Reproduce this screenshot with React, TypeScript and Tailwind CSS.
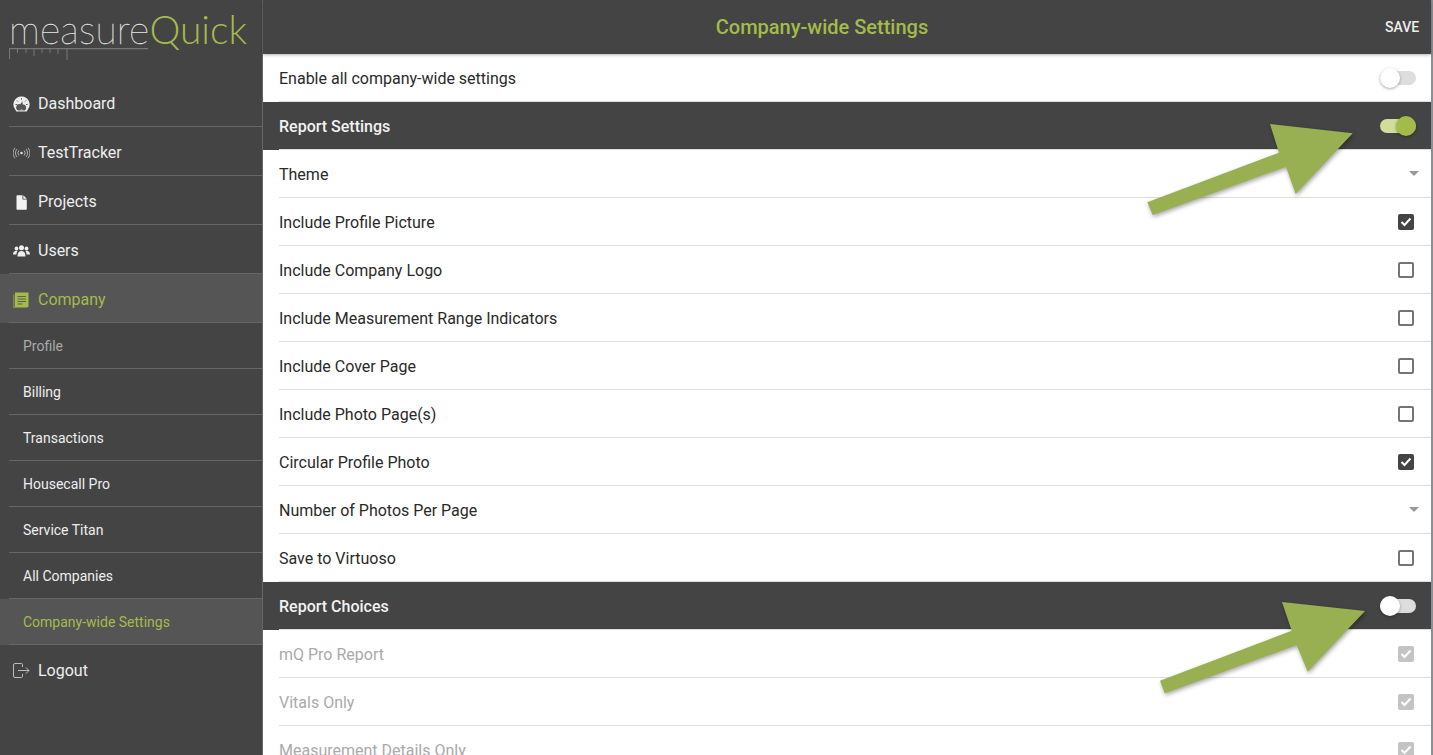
import type { ReactNode } from "react";

const green = "text-[#a3bb4a]";

function GaugeIcon() {
  return (
    <svg width="17" height="16" viewBox="0 0 17 16" className="shrink-0">
      <path d="M8.500 0.500a8 8 0 0 0-6.300 13l1.100 2h10.400l1.100-2A8 8 0 0 0 8.500 0.500z" fill="#eee" />
      <path d="M5.500 14.500a3.200 3.200 0 0 1 1.800-6.200l2.200-3 .2 3.300a3.200 3.200 0 0 1 2 5.900z" fill="#555" />
      <path d="M7 14.500a1.700 1.700 0 0 1 3 0z" fill="#eee" />
      <path d="M2.500 8.500h1.500M4 4.500l1 1M8.500 2.200v1.500M13 4.500l-1 1M14.500 8.500H13" stroke="#444" strokeWidth="0.9" />
    </svg>
  );
}

function SignalIcon() {
  return (
    <svg width="17" height="12" viewBox="0 0 17 12" fill="none" stroke="#bbb" strokeWidth="0.9" className="shrink-0">
      <circle cx="8.500" cy="6" r="1.300" fill="#ddd" stroke="none" />
      <path d="M6 3.500a3.500 3.500 0 0 0 0 5M11 3.500a3.500 3.500 0 0 1 0 5" />
      <path d="M4 2a6 6 0 0 0 0 8M13 2a6 6 0 0 1 0 8" />
      <path d="M2 .8a8.500 8.500 0 0 0 0 10.400M15 .8a8.500 8.500 0 0 1 0 10.400" />
    </svg>
  );
}

function FileIcon() {
  return (
    <svg width="11" height="15" viewBox="0 0 11 15" className="shrink-0 ml-[3px]">
      <path d="M0.500 1a.8.8 0 0 1 .8-.8H6.500V4.500H10.800V14a.8.8 0 0 1-.8.8H1.300a.8.8 0 0 1-.8-.8z" fill="#f2f2f2" />
      <path d="M7.300 0.300L10.800 3.700H7.300z" fill="#f2f2f2" />
    </svg>
  );
}

function UsersIcon() {
  return (
    <svg width="17" height="12" viewBox="0 0 17 12" fill="#eee" className="shrink-0">
      <circle cx="3.500" cy="3.500" r="1.900" />
      <circle cx="13.500" cy="3.500" r="1.900" />
      <circle cx="8.500" cy="2.800" r="2.500" />
      <path d="M0 9.500c0-2.500 1.500-3.700 3.500-3.700l1 .4c-.8 1-1.100 2.300-1.100 3.300z" />
      <path d="M17 9.500c0-2.500-1.500-3.700-3.500-3.700l-1 .4c.8 1 1.100 2.300 1.100 3.300z" />
      <path d="M4.500 11.500c0-3.500 1.500-5.500 4-5.500s4 2 4 5.500z" />
    </svg>
  );
}

function BookIcon() {
  return (
    <svg width="16" height="16" viewBox="0 0 16 16" className="shrink-0">
      <path d="M2 0.500h13.500v14.500H2z" fill="#a3bb4a" />
      <path d="M0.500 2.500H1.300v13h13v.5H.5z" fill="#a3bb4a" />
      <path d="M4.500 4.500h8.500M4.500 7h8.500M4.500 9.500h8.500M4.500 12h5" stroke="#555" strokeWidth="0.9" />
    </svg>
  );
}

function LogoutIcon() {
  return (
    <svg width="17" height="15" viewBox="0 0 17 15" fill="none" stroke="#bbb" strokeWidth="1" className="shrink-0">
      <path d="M9.500 4V1.500a1 1 0 0 0-1-1H2a1.500 1.500 0 0 0-1.500 1.500v11A1.500 1.500 0 0 0 2 14.500h6.500a1 1 0 0 0 1-1V11" />
      <path d="M5 7.500h11M13 4.500l3 3-3 3" />
    </svg>
  );
}

function Logo() {
  return (
    <div className="h-[78px] pl-[9px] pt-[10px]">
      <div className="flex items-baseline leading-none font-['Lato','Open_Sans',sans-serif] font-thin h-[38px]">
        <span className="text-[39px] text-[#e8e8e8] tracking-[0.2px] [-webkit-text-stroke:0.3px_#e8e8e8]">measure</span>
        <span className={`text-[39px] ${green} font-light`}>Quick</span>
      </div>
      <svg width="140" height="12" viewBox="0 0 140 12" className="block" stroke="#777" fill="none">
        <path d="M0 .5h139" strokeWidth="1.500" />
        <path d="M.5 1v10M8.500 1v4M17 1v4M25 1v7M33 1v4M41 1v4M49 1v5M58 1v11" strokeWidth="1" />
      </svg>
    </div>
  );
}

function NavItem({ icon, label, active }: { icon: ReactNode; label: string; active?: boolean }) {
  return (
    <div className={`pl-[9px] h-[49px] ${active ? "bg-[#555]" : ""}`}>
      <div className={`h-full flex items-center border-b border-[#666] pl-1 pt-[4px] text-base ${active ? green : "text-[#eee]"}`}>
        <span className="w-[25px] flex items-center shrink-0">{icon}</span>
        {label}
      </div>
    </div>
  );
}

function SubItem({ label, active, muted }: { label: string; active?: boolean; muted?: boolean }) {
  const color = active ? green : muted ? "text-[#aaa]" : "text-[#eee]";
  return (
    <div className={`pl-[9px] h-[46px] ${active ? "bg-[#555]" : ""}`}>
      <div className={`h-full flex items-center border-b border-[#666] pl-[14px] pt-[1px] text-sm ${color}`}>{label}</div>
    </div>
  );
}

function Sidebar() {
  return (
    <aside className="w-[263px] shrink-0 h-full bg-[#444] border-r border-[#666]">
      <Logo />
      <NavItem icon={<GaugeIcon />} label="Dashboard" />
      <NavItem icon={<SignalIcon />} label="TestTracker" />
      <NavItem icon={<FileIcon />} label="Projects" />
      <NavItem icon={<UsersIcon />} label="Users" />
      <NavItem icon={<BookIcon />} label="Company" active />
      <SubItem label="Profile" muted />
      <SubItem label="Billing" />
      <SubItem label="Transactions" />
      <SubItem label="Housecall Pro" />
      <SubItem label="Service Titan" />
      <SubItem label="All Companies" />
      <SubItem label="Company-wide Settings" active />
      <div className="pl-[9px] h-[49px]">
        <div className="h-full flex items-center pl-1 pt-[2px] text-base text-[#eee]">
          <span className="w-[25px] flex items-center shrink-0">
            <LogoutIcon />
          </span>
          Logout
        </div>
      </div>
    </aside>
  );
}

function Toggle({ on }: { on?: boolean }) {
  return (
    <div className={`w-9 h-3.5 mb-[2px] rounded-full flex items-center ${on ? "bg-[#d1dd98] justify-end" : "bg-[#ddd] justify-start"}`}>
      <div className={`w-5 h-5 rounded-full shadow-[0_1px_3px_rgba(0,0,0,0.35)] ${on ? "bg-[#a3bb4a]" : "bg-white"}`} />
    </div>
  );
}

function Check({ state }: { state: "on" | "off" | "disabled" }) {
  if (state === "off") {
    return <div className="w-4 h-4 mb-[2px] rounded-[2px] border-2 border-[#757575] mr-[17px]" />;
  }
  return (
    <div className={`w-4 h-4 mb-[2px] rounded-[2px] mr-[17px] flex items-center justify-center ${state === "on" ? "bg-[#444]" : "bg-[#c4c4c4]"}`}>
      <svg width="12" height="10" viewBox="0 0 12 10" fill="none" stroke="#fff" strokeWidth="2">
        <path d="M1.500 5l3 3 6-6.500" />
      </svg>
    </div>
  );
}

function Caret() {
  return <div className="w-0 h-0 mr-3 mb-[2px] border-x-[5px] border-x-transparent border-t-[5px] border-t-[#999]" />;
}

function Row({ label, children, disabled }: { label: string; children?: ReactNode; disabled?: boolean }) {
  return (
    <div className="pl-4 h-12 shrink-0 bg-white">
      <div className={`h-full flex items-center justify-between border-b border-[#ddd] pt-[2px] text-base ${disabled ? "text-[#aaa]" : "text-[#2a2a2a]"}`}>
        <span>{label}</span>
        {children}
      </div>
    </div>
  );
}

function HeaderRow({ label, on }: { label: string; on?: boolean }) {
  return (
    <div className="pl-4 h-12 shrink-0 bg-[#444]">
      <div className="h-full flex items-center justify-between border-b border-[#ddd] pt-[2px] pr-[15px] text-base font-medium text-[#f2f2f2]">
        <span>{label}</span>
        <Toggle on={on} />
      </div>
    </div>
  );
}

function Arrows() {
  return (
    <svg className="absolute inset-0 pointer-events-none drop-shadow-[1px_2px_2px_rgba(0,0,0,0.35)]" width="1433" height="755" viewBox="0 0 1433 755">
      <polygon points="1147.300,202.300 1152.700,215 1286,166.700 1295.700,194 1352.700,133.300 1270,124 1279,152.700" fill="#98b052" />
      <polygon points="1160,680.700 1164.700,693.300 1296.700,645 1307.700,671.700 1365,611 1282,602 1291.700,630.700" fill="#98b052" />
    </svg>
  );
}

export default function App() {
  return (
    <div className="relative w-full h-screen overflow-hidden flex font-['Roboto',sans-serif] bg-[#8d8f94]">
      <Sidebar />
      <main className="flex-1 min-w-0 h-full flex flex-col mr-[2px]">
        <header className="h-[54px] shrink-0 bg-[#444] flex items-center shadow-[0_1px_3px_rgba(0,0,0,0.3)] z-10">
          <h1 className={`flex-1 text-center text-xl font-medium ${green}`}>Company-wide Settings</h1>
          <button className="w-[50px] pl-1 text-left text-sm font-medium text-[#eee]">SAVE</button>
        </header>
        <Row label="Enable all company-wide settings">
          <div className="mr-[15px]">
            <Toggle />
          </div>
        </Row>
        <HeaderRow label="Report Settings" on />
        <Row label="Theme"><Caret /></Row>
        <Row label="Include Profile Picture"><Check state="on" /></Row>
        <Row label="Include Company Logo"><Check state="off" /></Row>
        <Row label="Include Measurement Range Indicators"><Check state="off" /></Row>
        <Row label="Include Cover Page"><Check state="off" /></Row>
        <Row label="Include Photo Page(s)"><Check state="off" /></Row>
        <Row label="Circular Profile Photo"><Check state="on" /></Row>
        <Row label="Number of Photos Per Page"><Caret /></Row>
        <Row label="Save to Virtuoso"><Check state="off" /></Row>
        <HeaderRow label="Report Choices" />
        <Row label="mQ Pro Report" disabled><Check state="disabled" /></Row>
        <Row label="Vitals Only" disabled><Check state="disabled" /></Row>
        <Row label="Measurement Details Only" disabled><Check state="disabled" /></Row>
      </main>
      <Arrows />
    </div>
  );
}
